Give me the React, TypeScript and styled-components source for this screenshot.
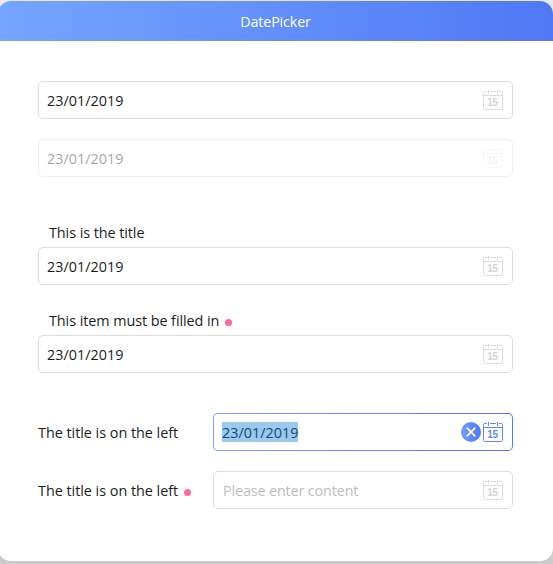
import React from "react";
import styled, { createGlobalStyle } from "styled-components";

const GlobalStyle = createGlobalStyle`
  * { box-sizing: border-box; }
  html, body { margin: 0; }
  body {
    height: 564px;
    overflow: hidden;
    background: linear-gradient(#e9e9e9 0 20px, #cbcbcb 540px);
    font-family: "Open Sans", "Noto Sans", sans-serif;
    font-size: 14.4px;
    color: #1c1c1c;
  }
`;

const Window = styled.main`
  width: 555px;
  height: 560px;
  margin: 1px 0 0 -2px;
  border-radius: 13px;
  overflow: hidden;
  background: #fff;
`;

const Header = styled.header`
  height: 40px;
  line-height: 41px;
  text-align: center;
  color: #fff;
  font-size: 14.3px;
  letter-spacing: -0.13px;
  background: linear-gradient(90deg, #75a5ff, #5078f5);
`;

const Form = styled.div`
  width: 475px;
  margin: 40px 0 0 40px;
  display: flex;
  flex-direction: column;
`;

const Row = styled.div<{ $gap?: number }>`
  display: flex;
  align-items: center;
  margin-bottom: ${(p) => p.$gap ?? 20}px;
`;

const Label = styled.div<{ $above?: boolean }>`
  display: flex;
  align-items: center;
  white-space: nowrap;
  flex: none;
  line-height: 20px;
  ${(p) =>
    p.$above
      ? "padding-left: 11px; margin-bottom: 4px; height: 20px; letter-spacing: -0.07px;"
      : "width: 175px; height: 38px; padding-top: 2px; letter-spacing: -0.03px;"}
`;

const Required = styled.i`
  width: 7px;
  height: 7px;
  margin: 3px 0 0 6px;
  border-radius: 50%;
  background: #ff6699;
`;

const Field = styled.div<{ $disabled?: boolean; $active?: boolean }>`
  height: 38px;
  flex: 1 0 38px;
  display: flex;
  align-items: center;
  padding: 0 9px 0 8px;
  border: 1px solid ${(p) => (p.$active ? "transparent" : "#dcdcdc")};
  border-radius: 5px;
  background: ${(p) =>
    p.$active
      ? "linear-gradient(#fff, #fff) padding-box, linear-gradient(90deg, #75a5ff, #5078f5) border-box"
      : "#fff"};
  opacity: ${(p) => (p.$disabled ? 0.4 : 1)};
`;

const Value = styled.span<{ $selected?: boolean }>`
  height: 20px;
  line-height: 22px;
  color: ${(p) => (p.$selected ? "#164673" : "#1c1c1c")};
  background: ${(p) => (p.$selected ? "#99c9ef" : "transparent")};
`;

const Placeholder = styled.span`
  height: 20px;
  padding-left: 1px;
  line-height: 22px;
  letter-spacing: -0.15px;
  color: #bdbdbd;
`;

const Actions = styled.span<{ $faint?: boolean }>`
  display: flex;
  gap: 2px;
  margin-left: auto;
  height: 20px;
  opacity: ${(p) => (p.$faint ? 0.55 : 1)};
`;

const CalendarIcon = ({ active }: { active?: boolean }) => (
  <svg width="20" height="20" viewBox="0 0 20 20" fill="none" stroke={active ? "#6088f8" : "#dcdcdc"}>
    <path d="M4 1.5H1.5Q.5 1.5 .5 2.5V18.5Q.5 19.5 1.5 19.5H18.5Q19.5 19.5 19.5 18.5V2.5Q19.5 1.5 18.5 1.5H16M7 1.5H13M.5 5.5H19.5M5.5 0V4M14.5 0V4" />
    <text x="9.5" y="16" textAnchor="middle" stroke="none" fill={active ? "#6088f8" : "#d3d3d3"} fontFamily="Liberation Sans, sans-serif" fontSize="10" letterSpacing="-0.3" fontWeight="700">15</text>
  </svg>
);

const ClearIcon = () => (
  <svg width="20" height="20" viewBox="0 0 20 20">
    <defs>
      <linearGradient id="clear-fill">
        <stop stopColor="#6f9dff" />
        <stop offset="1" stopColor="#5078f5" />
      </linearGradient>
    </defs>
    <circle cx="10" cy="10" r="10" fill="url(#clear-fill)" />
    <path d="M5.7 5.7L14.3 14.3M14.3 5.7L5.7 14.3" stroke="#fff" strokeWidth="1.7" />
  </svg>
);

type DateFieldProps = { value?: string; disabled?: boolean; active?: boolean };

const DateField = ({ value, disabled, active }: DateFieldProps) => (
  <Field $disabled={disabled} $active={active}>
    {value ? <Value $selected={active}>{value}</Value> : <Placeholder>Please enter content</Placeholder>}
    <Actions $faint={disabled}>
      {active && <ClearIcon />}
      <CalendarIcon active={active} />
    </Actions>
  </Field>
);

export default function App() {
  const date = "23/01/2019";
  return (
    <>
      <GlobalStyle />
      <Window>
        <Header>DatePicker</Header>
        <Form>
          <Row><DateField value={date} /></Row>
          <Row $gap={46}><DateField value={date} disabled /></Row>
          <Label $above>This is the title</Label>
          <Row $gap={26}><DateField value={date} /></Row>
          <Label $above>This item must be filled in<Required /></Label>
          <Row $gap={40}><DateField value={date} /></Row>
          <Row><Label>The title is on the left</Label><DateField value={date} active /></Row>
          <Row><Label>The title is on the left<Required /></Label><DateField /></Row>
        </Form>
      </Window>
    </>
  );
}
